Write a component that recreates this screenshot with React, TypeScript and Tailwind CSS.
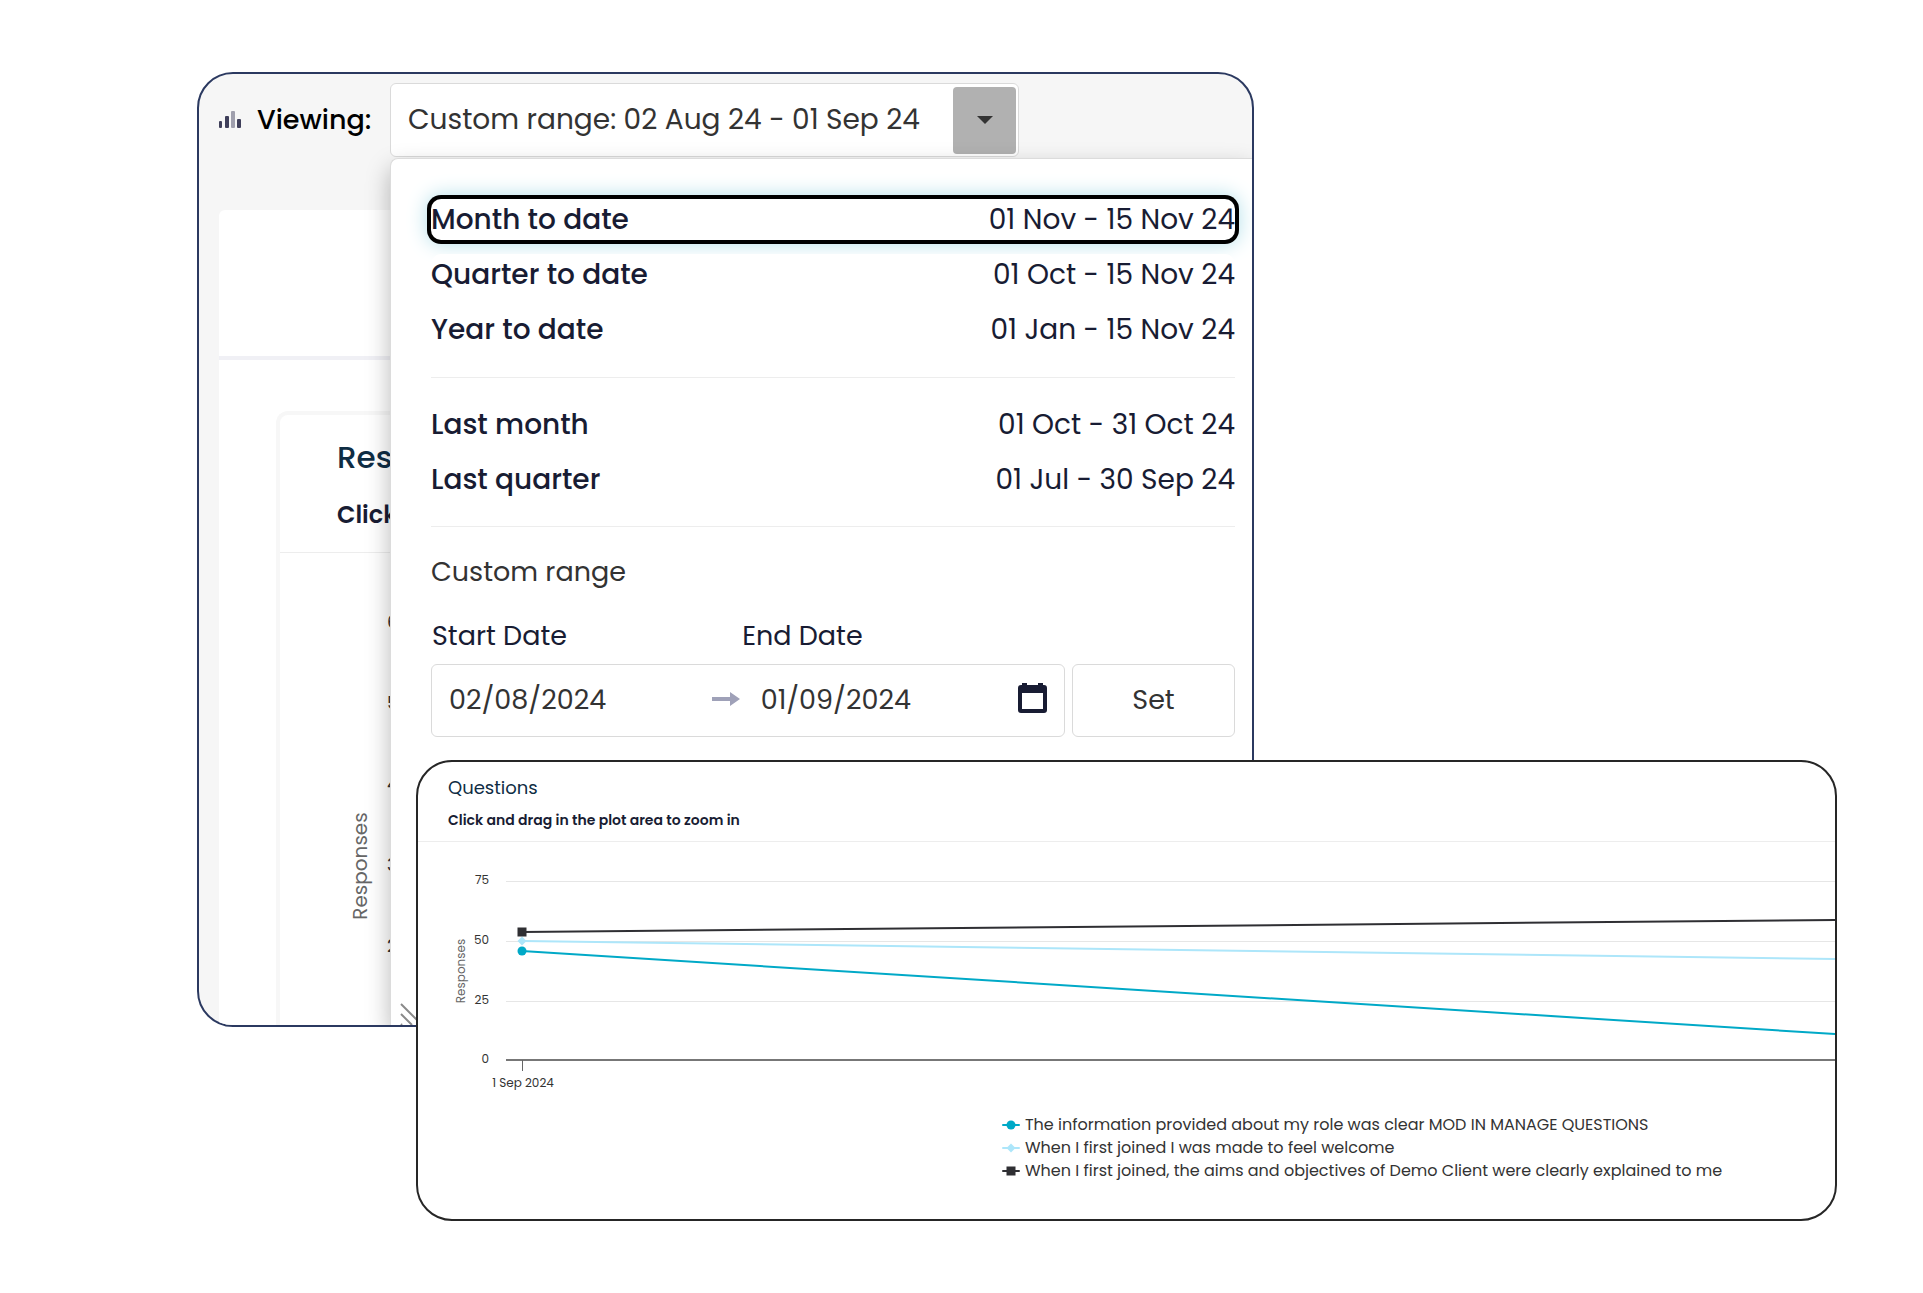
import React, { useState } from 'react'

const toDatePresets = [
  { label: 'Month to date', range: '01 Nov - 15 Nov 24' },
  { label: 'Quarter to date', range: '01 Oct - 15 Nov 24' },
  { label: 'Year to date', range: '01 Jan - 15 Nov 24' },
]

const lastPresets = [
  { label: 'Last month', range: '01 Oct - 31 Oct 24' },
  { label: 'Last quarter', range: '01 Jul - 30 Sep 24' },
]

const series = [
  {
    name: 'The information provided about my role was clear MOD IN MANAGE QUESTIONS',
    color: '#00a9c7',
    marker: 'circle',
    from: 109,
    to: 192,
  },
  {
    name: 'When I first joined I was made to feel welcome',
    color: '#ade6fa',
    marker: 'diamond',
    from: 99,
    to: 117,
  },
  {
    name: 'When I first joined, the aims and objectives of Demo Client were clearly explained to me',
    color: '#2f2f33',
    marker: 'square',
    from: 90,
    to: 78,
  },
]

const yTicks = [
  { value: 75, y: 39 },
  { value: 50, y: 99 },
  { value: 25, y: 159 },
  { value: 0, y: 218 },
]

const BarsIcon = () => (
  <svg width="22" height="18" viewBox="0 0 22 18" className="shrink-0" aria-hidden="true">
    <rect x="0" y="10" width="3" height="7" rx="1" fill="#3f3f5a" />
    <rect x="6" y="5" width="4" height="12" rx="1" fill="#3f3f5a" />
    <rect x="12" y="0" width="4" height="17" rx="1" fill="#9f9fad" />
    <rect x="18" y="8" width="4" height="9" rx="1" fill="#3f3f5a" />
  </svg>
)

const CalendarIcon = () => (
  <svg width="29" height="31" viewBox="0 0 29 31" aria-hidden="true">
    <path
      fill="#181c33"
      fillRule="evenodd"
      d="M4 0h5v2h11V0h5v2h1a3 3 0 0 1 3 3v22a3 3 0 0 1-3 3H3a3 3 0 0 1-3-3V5a3 3 0 0 1 3-3h1V0Zm0 10v16h21V10H4Z"
    />
  </svg>
)

const ArrowIcon = () => (
  <svg width="28" height="14" viewBox="0 0 28 14" aria-hidden="true">
    <path d="M0 5h18V0l10 7-10 7V9H0V5Z" fill="#9fa1b8" />
  </svg>
)

const Marker = ({ shape, x, y, color }: { shape: string; x: number; y: number; color: string }) => {
  if (shape === 'circle') return <circle cx={x} cy={y} r="4.5" fill={color} />
  if (shape === 'square')
    return <rect x={x - 4.5} y={y - 4.5} width="9" height="9" fill={color} />
  return <path d={`M${x} ${y - 4.5}l4.5 4.5-4.5 4.5-4.5-4.5Z`} fill={color} />
}

type PresetRowProps = {
  label: string
  range: string
  active: boolean
  onSelect: () => void
}

const PresetRow = ({ label, range, active, onSelect }: PresetRowProps) => (
  <button
    type="button"
    onClick={onSelect}
    className={`flex h-[41px] w-full items-center justify-between rounded-[10px] bg-white text-[28px] text-[#181c33] outline-none ${
      active ? 'shadow-[0_0_20px_4px_#b4e0ea] ring-4 ring-black' : ''
    }`}
  >
    <span className="font-medium">{label}</span>
    <span>{range}</span>
  </button>
)

const ResponsesPanel = () => (
  <div className="flex w-[191px] shrink-0 flex-col overflow-hidden pt-[52px] pl-5 whitespace-nowrap">
    <div className="h-[150px] rounded-tl-md border-b-4 border-[#f0f0f5] bg-white" />
    <div className="grow bg-white pt-[51px] pl-[57px]">
      <div className="h-full rounded-tl-xl border-t-4 border-l-4 border-[#f7f7f7]">
        <div className="border-b border-[#ededed] pt-[22px] pb-[21px] pl-[57px]">
          <h2 className="text-[31px] leading-10 font-medium text-[#0f2d44]">Responses</h2>
          <p className="mt-[22px] text-2xl leading-8 font-semibold text-[#181c33]">
            Click and drag in the plot area to zoom in
          </p>
        </div>
        <svg width="110" height="472" role="img" aria-label="Responses axis">
          <text
            x="87"
            y="313"
            transform="rotate(-90 87 313)"
            textAnchor="middle"
            fontSize="20"
            fill="#666"
          >
            Responses
          </text>
          {[6, 5, 4, 3, 2].map((tick, i) => (
            <text key={tick} x="107" y={75 + i * 81} fontSize="18" fill="#333">
              {tick}
            </text>
          ))}
        </svg>
      </div>
    </div>
  </div>
)

const DateRangeMenu = () => {
  const [selected, setSelected] = useState('Month to date')
  const [start, setStart] = useState('02/08/2024')
  const [end, setEnd] = useState('01/09/2024')

  return (
    <div className="relative z-10 flex min-w-0 grow flex-col justify-between rounded-tl-lg border-t border-l border-[#dcdcdc] bg-white shadow-[0_10px_24px_rgba(0,0,0,0.28)]">
      <div className="pt-10 pr-[17px] pl-10">
        <div className="flex flex-col gap-3.5 pb-[27px]">
          {toDatePresets.map((preset) => (
            <PresetRow
              key={preset.label}
              {...preset}
              active={selected === preset.label}
              onSelect={() => setSelected(preset.label)}
            />
          ))}
        </div>
        <div className="flex flex-col gap-3.5 border-y border-[#ededed] py-[26px]">
          {lastPresets.map((preset) => (
            <PresetRow
              key={preset.label}
              {...preset}
              active={selected === preset.label}
              onSelect={() => setSelected(preset.label)}
            />
          ))}
        </div>
        <p className="mt-[25px] text-[27px] leading-10 text-[#333]">Custom range</p>
        <div className="mt-6 flex items-end gap-[7px] text-[27px]">
          <div className="min-w-0 grow">
            <div className="flex pl-px leading-10 text-[#181c33]">
              <label htmlFor="start-date" className="w-[49%]">
                Start Date
              </label>
              <label htmlFor="end-date">End Date</label>
            </div>
            <div className="mt-2 flex h-[73px] items-center rounded-md border border-[#dadada] text-[#333]">
              <div className="flex w-[49%] shrink-0 items-center pr-0.5 pl-[17px]">
                <input
                  id="start-date"
                  value={start}
                  onChange={(e) => setStart(e.target.value)}
                  className="min-w-0 grow outline-none"
                />
                <span className="shrink-0 pb-1">
                  <ArrowIcon />
                </span>
              </div>
              <input
                id="end-date"
                value={end}
                onChange={(e) => setEnd(e.target.value)}
                className="ml-[19px] min-w-0 grow outline-none"
              />
              <button type="button" aria-label="Open calendar" className="mr-[17px] shrink-0 pb-1">
                <CalendarIcon />
              </button>
            </div>
          </div>
          <button
            type="button"
            className="h-[73px] w-[163px] shrink-0 rounded-md border border-[#dadada] text-[#333]"
          >
            Set
          </button>
        </div>
      </div>
      <svg width="40" height="24" viewBox="0 0 40 24" className="ml-[9px]" aria-hidden="true">
        <path d="M1 3l21 21M1 13l11 11M1 23l1 1" stroke="#8a8a8a" strokeWidth="2" fill="none" />
      </svg>
    </div>
  )
}

const RangeCard = () => (
  <section className="col-span-2 col-start-1 row-span-2 row-start-1 flex flex-col overflow-hidden rounded-[36px] border-2 border-[#2b3960] bg-[#f6f6f6]">
    <div className="flex items-center pt-[9px] pb-px pl-5">
      <BarsIcon />
      <span id="viewing-label" className="w-[149px] shrink-0 pl-4 text-[27px] font-medium text-black">
        Viewing:
      </span>
      <button
        type="button"
        aria-haspopup="dialog"
        aria-expanded="true"
        aria-labelledby="viewing-label viewing-value"
        className="flex h-[74px] w-[629px] items-center justify-between rounded-md border border-[#dadada] bg-white pr-[2px] pl-[17px] text-[28px] whitespace-nowrap text-[#333]"
      >
        <span id="viewing-value">Custom range: 02 Aug 24 - 01 Sep 24</span>
        <span className="flex h-[67px] w-[63px] items-center justify-center rounded bg-[#b1b1b1]">
          <svg width="16" height="8" viewBox="0 0 16 8" aria-hidden="true">
            <path d="M0 0h16L8 8Z" fill="#333" />
          </svg>
        </span>
      </button>
    </div>
    <div className="flex grow">
      <ResponsesPanel />
      <DateRangeMenu />
    </div>
  </section>
)

const QuestionsCard = () => (
  <section className="z-20 col-span-2 col-start-2 row-span-2 row-start-2 overflow-hidden rounded-[36px] border-2 border-[#262626] bg-white">
    <header className="border-b border-[#ededed] pt-3.5 pb-[9px] pl-[30px]">
      <h2 className="text-lg leading-6 text-[#0f2d44]">Questions</h2>
      <p className="mt-2 text-sm leading-6 font-semibold text-[#181c33]">
        Click and drag in the plot area to zoom in
      </p>
    </header>
    <svg width="100%" height="271" role="img" aria-label="Responses per question over time">
      {yTicks.map(({ value, y }) => (
        <g key={value}>
          <line
            x1="88"
            x2="100%"
            y1={y}
            y2={y}
            stroke={value === 0 ? '#777' : '#e6e6e6'}
            strokeWidth={value === 0 ? 2 : 1}
            shapeRendering="crispEdges"
          />
          <text x="71" y={y + 3} textAnchor="end" fontSize="12" fill="#333">
            {value}
          </text>
        </g>
      ))}
      <text x="47" y="129" transform="rotate(-90 47 129)" textAnchor="middle" fontSize="12" fill="#666">
        Responses
      </text>
      <line x1="104" x2="104" y1="218" y2="229" stroke="#666" shapeRendering="crispEdges" />
      <text x="105" y="245" textAnchor="middle" fontSize="12" fill="#333">
        1 Sep 2024
      </text>
      {series.map(({ name, color, marker, from, to }) => (
        <g key={name}>
          <line x1="104" x2="100%" y1={from} y2={to} stroke={color} strokeWidth="2" />
          <Marker shape={marker} x={104} y={from} color={color} />
        </g>
      ))}
    </svg>
    <ul className="ml-[41%] pb-[37px] pl-[3px]">
      {series.map(({ name, color, marker }) => (
        <li key={name}>
          <button
            type="button"
            className="flex h-[23px] items-center gap-[5px] text-left text-base whitespace-nowrap text-[#333]"
          >
            <svg width="18" height="10" aria-hidden="true">
              <line x1="1" x2="17" y1="5" y2="5" stroke={color} strokeWidth="2" strokeLinecap="round" />
              <Marker shape={marker} x={9} y={5} color={color} />
            </svg>
            {name}
          </button>
        </li>
      ))}
    </ul>
  </section>
)

export default function App() {
  return (
    <main className="min-h-screen bg-white pt-[72px] pr-[86px] pb-[72px] pl-[197px] font-['Poppins','Inter',sans-serif]">
      <div className="grid grid-cols-[219px_838fr_583fr] grid-rows-[auto_267px_auto]">
        <RangeCard />
        <QuestionsCard />
      </div>
    </main>
  )
}
